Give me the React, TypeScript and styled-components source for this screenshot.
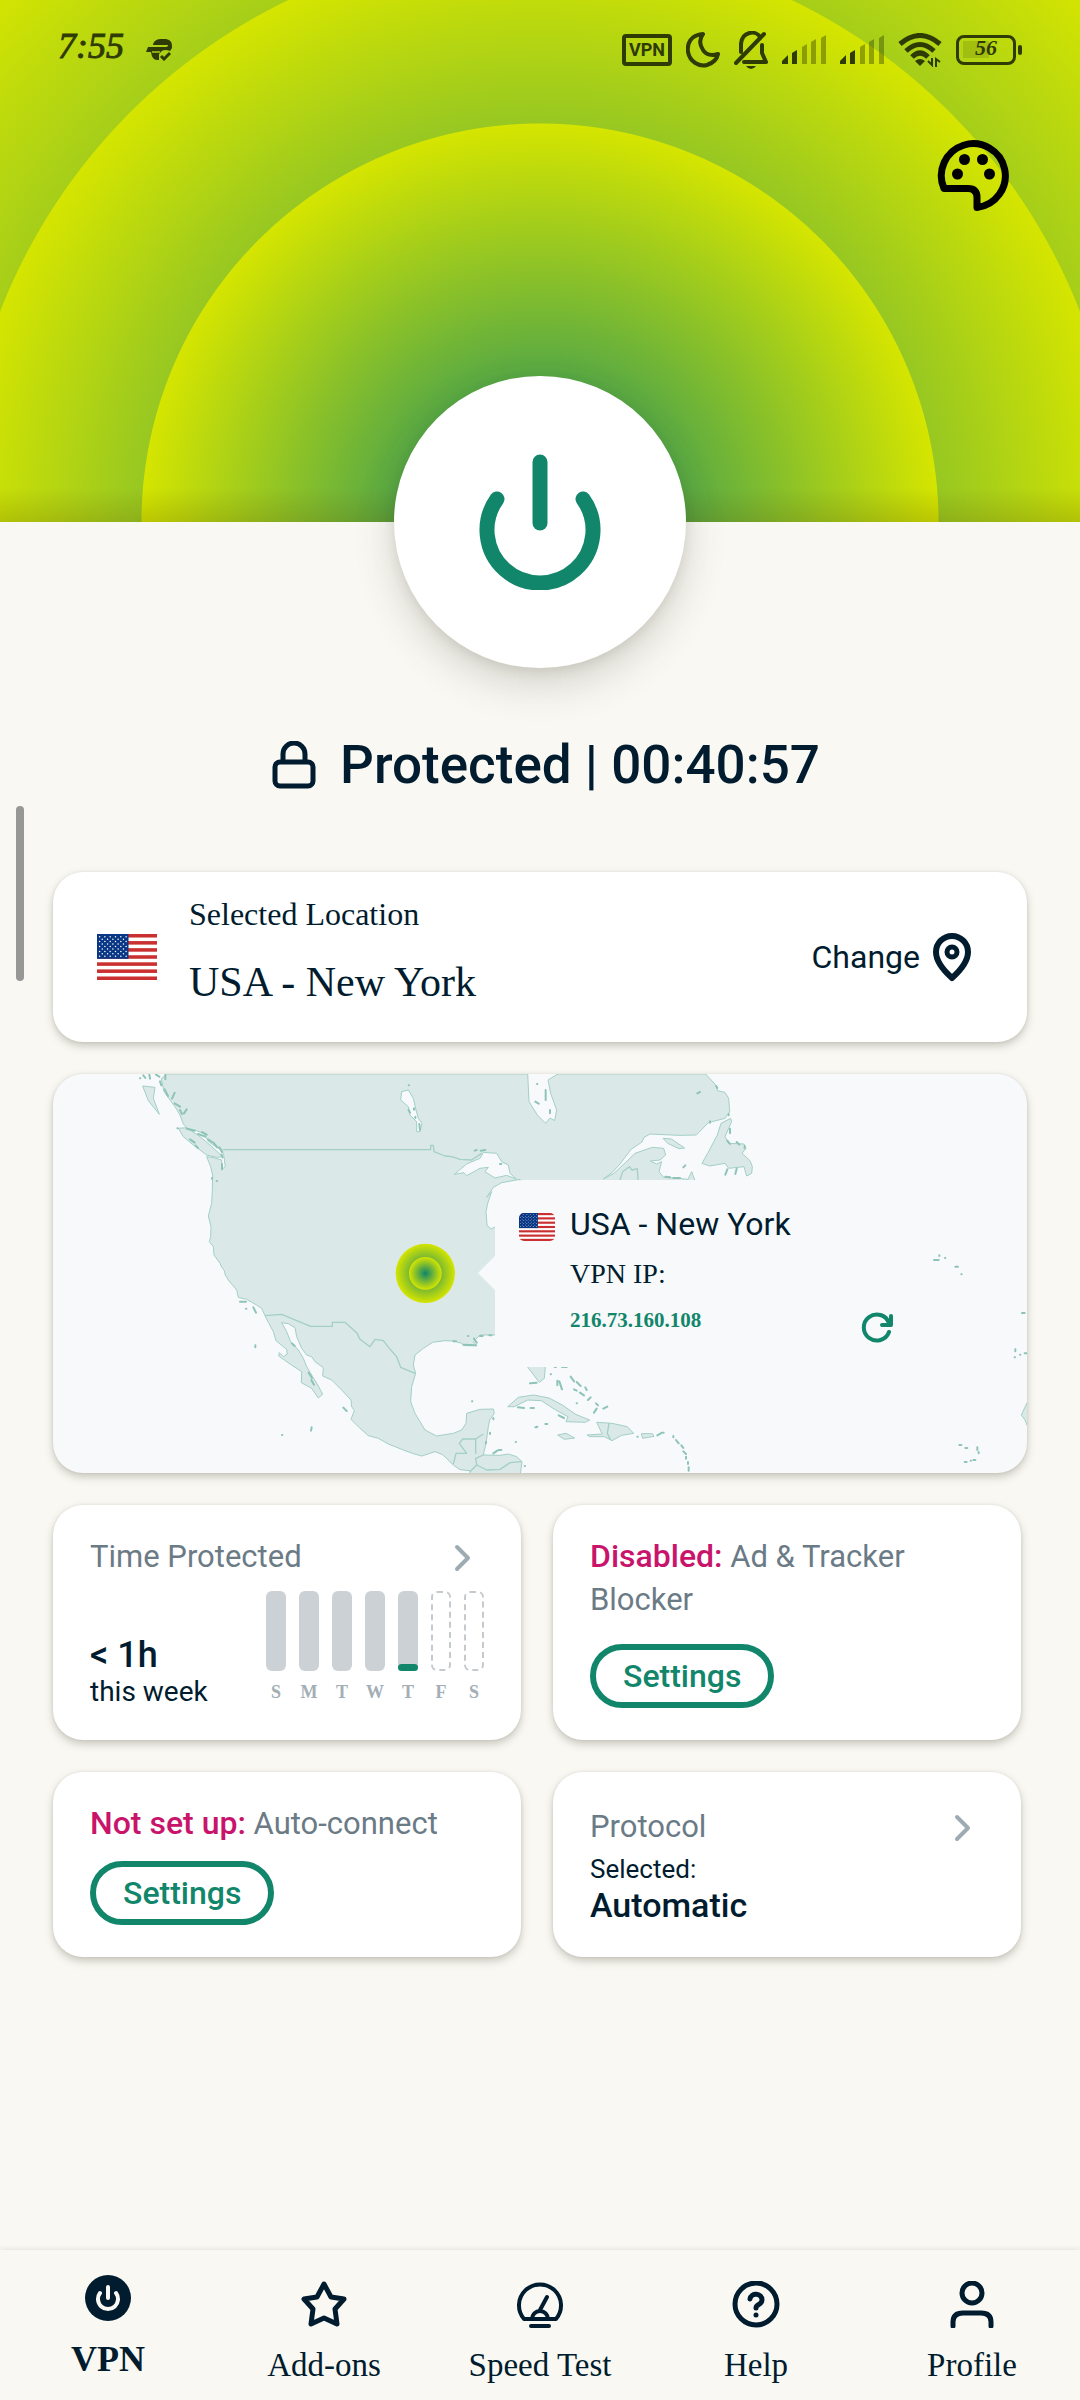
import React from "react";
import styled, { createGlobalStyle } from "styled-components";

const ink = "#001c2e";
const green = "#12866b";
const muted = "#6b7b86";
const faint = "#9fabb3";
const statusInk = "#2f3b04";
const sans = `Roboto, "Noto Sans", sans-serif`;
const serif = `"Liberation Serif", serif`;

const GlobalStyle = createGlobalStyle`
  *, *::before, *::after { box-sizing: border-box; }
  body { margin: 0; background: #f9f8f3; color: ${ink}; font-family: ${sans}; }
  button { font: inherit; color: inherit; cursor: pointer; }
  p, h1, h2 { margin: 0; font-weight: 400; }
  svg { display: block; flex: none; }
`;

const Screen = styled.div`
  position: relative;
  display: flex;
  flex-direction: column;
  min-height: 100vh;
  overflow: hidden;
`;

const Hero = styled.header`
  height: 522px;
  background:
    linear-gradient(to top, rgba(90, 80, 0, 0.2), rgba(90, 80, 0, 0) 34px),
    radial-gradient(circle at 50% 100%, #0f866c 0, #d5e500 398px, transparent 399px),
    radial-gradient(circle at 50% 100%, #0f866c 0, #d5e500 579px, transparent 580px),
    radial-gradient(circle at 50% 100%, #0f866c 0, #d5e500 760px);
`;

const StatusBar = styled.div`
  display: flex;
  align-items: center;
  gap: 14px;
  height: 100px;
  padding: 0 58px;
  color: ${statusInk};
`;

const Clock = styled.time`
  margin-right: 8px;
  padding-bottom: 8px;
  font: italic 36px/44px ${serif};
  -webkit-text-stroke: 1px ${statusInk};
`;

const Spacer = styled.span`
  flex: 1;
`;

const VpnBadge = styled.span`
  display: grid;
  place-items: center;
  width: 50px;
  height: 32px;
  border: 4px solid ${statusInk};
  border-radius: 4px;
  font: 700 18px/20px ${sans};
`;

const Battery = styled.span`
  display: flex;
  align-items: center;
  gap: 2px;
`;

const BatteryBody = styled.span`
  display: grid;
  place-items: center;
  width: 60px;
  height: 30px;
  padding-bottom: 4px;
  border: 3px solid ${statusInk};
  border-radius: 8px;
  background: linear-gradient(rgba(47, 59, 4, 0.15), rgba(47, 59, 4, 0.15)) 4px 3px / 26px 17px no-repeat;
  font: italic 700 22px/20px ${serif};
`;

const BatteryTip = styled.span`
  width: 4px;
  height: 10px;
  border-radius: 2px;
  background: ${statusInk};
`;

const ThemeBar = styled.div`
  display: flex;
  justify-content: flex-end;
  padding: 36px 65px 0;
`;

const PlainButton = styled.button`
  display: inline-flex;
  align-items: center;
  gap: 12px;
  padding: 0;
  border: 0;
  background: none;
`;

const PowerButton = styled.button`
  display: grid;
  place-items: center;
  align-self: center;
  width: 292px;
  height: 292px;
  margin-top: -146px;
  padding: 0;
  border: 0;
  border-radius: 50%;
  background: #fff;
  color: ${green};
  box-shadow: 0 16px 40px rgba(60, 60, 40, 0.2), 0 4px 12px rgba(60, 60, 40, 0.1);
`;

const Protection = styled.h1`
  display: flex;
  justify-content: center;
  align-items: center;
  gap: 24px;
  margin: 67px 0 77px;
  padding-left: 12px;
  font-weight: 500;
  font-size: 53px;
  line-height: 60px;
`;

const ScrollThumb = styled.span`
  position: absolute;
  top: 806px;
  left: 16px;
  width: 8px;
  height: 175px;
  border-radius: 4px;
  background: #979796;
`;

const Main = styled.main`
  display: flex;
  flex-direction: column;
  gap: 32px;
  padding: 0 53px 32px;
`;

const Card = styled.section`
  border-radius: 30px;
  background: #fff;
  box-shadow: 0 4px 8px rgba(60, 60, 40, 0.26), 0 0 3px rgba(60, 60, 40, 0.1);
`;

const LocationCard = styled(Card)`
  display: flex;
  align-items: center;
  gap: 32px;
  min-height: 170px;
  padding: 0 55px 0 44px;
`;

const LocationText = styled.div`
  display: grid;
  gap: 24px;
  flex: 1;
  padding-bottom: 14px;
  font-family: ${serif};
`;

const LocationLabel = styled.p`
  font-size: 32px;
  line-height: 40px;
`;

const LocationName = styled.h2`
  font-size: 42px;
  line-height: 48px;
`;

const ChangeButton = styled(PlainButton)`
  font-size: 32px;
  line-height: 40px;
`;

const MapCard = styled(Card)`
  position: relative;
  height: 399px;
  background: #f7f9fb;
`;

const MapDrawing = styled.svg`
  width: 100%;
  height: 100%;
  border-radius: 30px;
`;

const Popup = styled.div`
  position: absolute;
  top: 106px;
  left: calc(50% - 45px);
  display: grid;
  grid-template-columns: 36px 1fr 36px;
  column-gap: 15px;
  row-gap: 12px;
  align-content: start;
  width: 424px;
  height: 187px;
  padding: 24px;
  border-radius: 30px 30px 0 0;
  background: #f7f9fb;

  &::before {
    content: "";
    position: absolute;
    top: 75px;
    left: -17px;
    border: solid transparent;
    border-width: 18px 18px 18px 0;
    border-right-color: #f7f9fb;
  }
`;

const PopupFlag = styled.div`
  display: flex;
  align-items: flex-end;
  padding-bottom: 3px;
`;

const PopupTitle = styled.h2`
  grid-column: 2 / 4;
  font-size: 32px;
  line-height: 40px;
`;

const PopupLabel = styled.p`
  grid-column: 2 / 4;
  font: 28px/36px ${serif};
`;

const PopupIp = styled.p`
  grid-column: 2;
  color: ${green};
  font: 700 21px/32px ${serif};
`;

const RefreshButton = styled(PlainButton)`
  justify-content: center;
  padding-top: 8px;
  color: ${green};
`;

const Tiles = styled.div`
  display: grid;
  grid-template-columns: 1fr 1fr;
  gap: 32px;
  padding-right: 6px;
`;

const Tile = styled(Card)<{ $bottom?: boolean }>`
  display: flex;
  flex-direction: column;
  justify-content: ${(p) => (p.$bottom ? "flex-end" : "flex-start")};
  padding: 30px 37px 32px;
`;

const TileHeader = styled.div`
  display: flex;
  justify-content: space-between;
  align-items: center;
  padding-right: 10px;
`;

const TileTitle = styled.h2`
  color: ${muted};
  font-size: 31px;
  line-height: 43px;
`;

const Warning = styled.strong`
  color: #c9146c;
  font-weight: 500;
  font-size: 32px;
`;

const TileAction = styled.div`
  margin-top: auto;
  padding-top: 16px;
`;

const SettingsButton = styled.button`
  display: block;
  height: 64px;
  padding: 0 27px;
  border: 6px solid ${green};
  border-radius: 32px;
  background: none;
  color: ${green};
  font-weight: 500;
  font-size: 32px;
  line-height: 40px;
`;

const WeekRow = styled.div`
  display: flex;
  justify-content: space-between;
  min-height: 117px;
  margin-top: 13px;
`;

const WeekTotal = styled.div`
  align-self: flex-end;
`;

const Hours = styled.p`
  font-weight: 500;
  font-size: 36px;
  line-height: 42px;
`;

const Period = styled.p`
  font-size: 28px;
  line-height: 32px;
`;

const Chart = styled.div`
  display: flex;
  gap: 13px;
`;

const Day = styled.div`
  display: grid;
  align-content: start;
  justify-items: center;
  gap: 11px;
  width: 20px;
  color: #a3aeb5;
  font: 700 18px/20px ${serif};
`;

const Bar = styled.div<{ $future?: boolean }>`
  display: flex;
  align-items: flex-end;
  width: 20px;
  height: 80px;
  border: ${(p) => (p.$future ? "2px dashed #c4cacd" : "0")};
  border-radius: 6px;
  background: ${(p) => (p.$future ? "none" : "#ccd1d5")};
`;

const BarFill = styled.div`
  width: 100%;
  border-radius: 4px;
  background: ${green};
`;

const SelectedLabel = styled.p`
  margin-top: 5px;
  font-size: 26px;
  line-height: 32px;
`;

const SelectedValue = styled.p`
  font-weight: 500;
  font-size: 34px;
  line-height: 40px;
`;

const BottomNav = styled.nav`
  display: grid;
  grid-template-columns: repeat(5, 1fr);
  height: 150px;
  margin-top: auto;
  background: #f9f8f3;
  box-shadow: 0 -2px 4px rgba(60, 60, 40, 0.08);
`;

const NavLink = styled.a<{ $active?: boolean }>`
  display: flex;
  flex-direction: column;
  align-items: center;
  gap: 17px;
  padding-top: ${(p) => (p.$active ? "25px" : "31px")};
  color: ${ink};
  text-decoration: none;
  white-space: nowrap;
  font: ${(p) => (p.$active ? "700 36px/40px" : "400 33px/40px")} ${serif};
`;

function Flag({ width, height, radius = 0 }: { width: number; height: number; radius?: number }) {
  const stars: React.ReactNode[] = [];
  for (let r = 0; r < 9; r++) {
    const odd = r % 2;
    for (let c = 0; c < 6 - odd; c++) {
      stars.push(<circle key={`${r}-${c}`} cx={2.6 + c * 5.3 + odd * 2.65} cy={2.7 + r * 2.45} r="0.75" fill="#fff" />);
    }
  }
  return (
    <svg width={width} height={height} viewBox="0 0 60 46" preserveAspectRatio="none" style={{ borderRadius: radius }} role="img" aria-label="United States flag">
      <rect width="60" height="46" fill="#fff" />
      {[0, 1, 2, 3, 4, 5, 6].map((i) => (
        <rect key={i} y={i * 7.08} width="60" height="3.54" fill="#c9302f" />
      ))}
      <rect width="31.5" height="24.8" fill="#0a3785" />
      {stars}
    </svg>
  );
}

function Signal() {
  return (
    <svg width="44" height="30" viewBox="0 0 44 30" fill={statusInk}>
      <path d="M0 29V26L6 20V29Z" />
      <path d="M10 29V18L15 15V29Z" />
      <path d="M20 29V12L25 9V29ZM29 29V7L34 4V29ZM39 29V3L44 0V29Z" opacity="0.4" />
    </svg>
  );
}

function Chevron() {
  return (
    <svg width="22" height="32" viewBox="0 0 22 32" fill="none" stroke={faint} strokeWidth="4" strokeLinecap="round" strokeLinejoin="round">
      <path d="M5 6L16 17L5 28" />
    </svg>
  );
}

const land =
  "M380 42L364 56L372 95L390 120L405 140L420 165L430 192L442 205L470 212L492 222L506 245L530 262L546 270L552 290L556 320L546 328L545 300L520 293L500 290L512 320L518 345L517 390L515 430L505 468L513 500L512 530L508 545L520 560L522 585L540 610L543 618L553 632L556 645L565 660L590 690L595 712L620 718L650 735L665 745L675 767L685 787L700 815L708 842L740 868L742 882L730 890L718 878L716 888L750 912L785 935L784 968L815 985L835 1014L848 1003L835 978L818 950L800 920L790 895L775 870L752 845L740 815L725 788L745 791L765 803L770 830L785 865L800 885L815 890L825 905L850 923L848 948L875 960L905 990L933 1020L935 1040L943 1052L933 1078L955 1100L985 1127L1015 1135L1045 1152L1090 1170L1120 1181L1145 1188L1185 1175L1208 1184L1240 1215L1260 1229L1290 1232V1250H1440L1446 1205L1430 1190L1405 1182L1380 1186L1330 1185L1338 1150L1345 1100L1349 1080L1363 1060L1360 1047L1320 1048L1280 1060L1278 1090L1265 1110L1240 1120L1190 1128L1155 1110L1125 1060L1112 1025L1115 980L1127 940L1120 915L1125 885L1150 865L1178 847L1215 842L1240 843L1265 850L1275 857L1310 857L1300 845L1320 825L1365 825L1430 840L1463 921L1481 945L1498 967L1513 955L1516 921L1500 830L1560 650L1700 480L1960 368L1960 360L1925 356L1871 352L1857 335L1865 305L1850 312L1831 303L1860 300L1877 285L1871 265L1837 262L1785 280L1756 308L1722 340L1690 357L1716 338L1740 312L1773 268L1806 246L1812 232L1830 222L1917 226L1969 225L2005 188L2055 175L2069 155L2066 115L2055 97L2032 92L2030 78L2009 55L1997 42Z";

const islands = [
  "M415 205L440 203L480 230L510 255L548 290L530 292L500 285L460 255L430 230Z",
  "M308 78L345 82L340 115L358 163L325 122Z",
  "M1986 310L2003 280L2032 225L2043 190L2072 175L2075 185L2055 230L2066 250L2112 252L2118 265L2106 280L2130 302L2137 320L2135 340L2120 348L2112 320L2066 325L2055 310L2009 318Z",
  "M1869 235L1894 237L1934 264L1917 266L1883 250Z",
  "M1942 362L1955 335L1965 362Z",
  "M1403 1040L1435 1012L1481 1005L1527 1014L1567 1035L1607 1063L1649 1080L1636 1087L1578 1085L1584 1070L1544 1048L1504 1022L1463 1020L1423 1040Z",
  "M1641 1125L1687 1122L1670 1087L1716 1090L1762 1100L1781 1120L1745 1126L1716 1142L1693 1130L1650 1130Z",
  "M1804 1121L1837 1121L1842 1129L1808 1135Z",
  "M1553 1125L1578 1120L1604 1134L1573 1138Z",
  "M2944 1065L2965 1020V1105L2955 1080Z",
];

const waters = [
  "M1463 40L1467 125L1492 165L1517 190L1530 174L1544 182L1550 150L1532 100L1524 60L1557 40Z",
  "M1085 95L1105 90L1120 115L1128 150L1135 175L1146 190L1140 215L1130 215L1130 185L1110 165L1105 140L1082 120Z",
  "M1243 343L1280 312L1320 295L1330 277L1370 280L1385 305L1405 315L1410 340L1430 358L1400 346L1365 354L1335 335L1345 322L1320 325L1280 347L1272 338Z",
  "M1440 358L1385 368L1360 382L1340 412L1355 395L1343 430L1338 455L1341 495L1352 507L1368 500L1440 420Z",
];

const specks =
  "M300 55h1M310 46l6 8M328 44l2 12M348 44l10 6M360 64l4 12M376 44v14M374 88l10 20M396 116l8-18M404 130l16 10M420 150l6 12M432 160l8-12M440 206l24 6M474 222l22 8M486 216l14 8M504 238l12 8M520 248l12 14M538 262l8 14M544 284l4 8M450 238l14 10M466 256l8 8M412 205h1M546 328v-16M516 354v2M530 363h1M600 725h18M618 746h1M640 742l8 16M646 856v6M726 1125h1M813 1112l2-10M910 1043l10 10M806 938l10 16M814 960l8 14M756 850l8 8M1106 76h1M1106 150l4 8M1122 145v4M1126 170v4M1138 192l2 18M1304 272l6-2M1322 272l14-2M1380 312h4M1296 1024h1M1360 1074v4M1350 1118v4M1338 1146v4M1284 828h1M1240 844h8M1270 854l38 2M1302 836l8 12M1320 828h8M1348 826h6M1360 1180l12-8M1376 1170h8M1427 1146h1M1454 1218h1M1434 1042l18 2M1472 1044h10M1486 1102h4M1470 970l20-2M1491 72h1M1517 90v30M1530 150v10M1486 125l10 6M1532 943h1M1544 921h4M1566 921h14M1558 964l8 24M1552 962v14M1592 950l10 14M1610 966l12 12M1602 988l8 4M1620 998l12 8M1636 982l4 8M1644 1020l8-8M1668 1030l6 6M1662 1058l8-12M1690 1046l12-6M1610 1030h1M1490 1100h2M1516 1092h6M1556 1066l16 8M1792 1130h1M1852 1126l14-8M1870 1118h1M1900 1128v4M1908 1140l8 10M1924 1156l6 8M1930 1174l8 8M1938 1190v6M1944 1206v6M1946 1222v10M2028 78l4 6M1972 100l8-4M2010 184v4M2066 162v4M2070 206v14M2062 242l8 10M2090 246l8 8M2114 258v6M2090 326l-4 16M2062 328l-6 16M1930 322l6-6M1876 350l14 2M1900 354h20M2682 600h14M2698 586v2M2715 594h1M2746 620h8M2764 643h1M2758 1155h6M2776 1164h6M2812 1162v8M2816 1176v4M2800 1200h6M2774 1206h6M2792 1202h1M2926 868v6M2924 892h1M2940 884h1M2954 880h6M2946 759h8";

function NorthAmerica() {
  return (
    <MapDrawing viewBox="39 42 2922 1197" preserveAspectRatio="xMidYMid slice" role="img" aria-label="Map of North America">
      <defs>
        <radialGradient id="pulse">
          <stop offset="0" stopColor="#0f866c" />
          <stop offset="1" stopColor="#d5e500" />
        </radialGradient>
      </defs>
      <g fill="#dae9e7" stroke="#a3cfc5" strokeWidth="3" strokeLinejoin="round">
        <path d={land} />
        {islands.map((d) => (
          <path key={d} d={d} />
        ))}
      </g>
      <g fill="#f7f9fb" stroke="#a3cfc5" strokeWidth="3" strokeLinejoin="round">
        {waters.map((d) => (
          <path key={d} d={d} />
        ))}
      </g>
      <g fill="none" stroke="#a3cfc5" strokeWidth="4" strokeLinejoin="round">
        <path d="M548 269H1172V256H1180L1182 275L1215 288L1235 290L1260 298L1295 300L1325 280" />
        <path d="M675 767L725 763L812 799H877V787H915L950 818L960 838L990 860L1005 838L1030 842L1048 865L1070 890L1082 922L1125 940" />
        <path d="M1240 1212L1248 1180H1280L1258 1150L1268 1137H1307V1182M1307 1137L1330 1122M1290 1235L1310 1215L1307 1195L1330 1185M1310 1215L1340 1230L1380 1228L1410 1208L1445 1205" />
        <path d="M1740 360L1748 335L1768 320L1776 330L1792 326L1794 360M1707 1090L1702 1120L1712 1140" />
      </g>
      <path d={specks} fill="none" stroke="#8ec4b8" strokeWidth="6" strokeLinecap="round" strokeLinejoin="round" />
      <circle cx="1156" cy="640" r="89" fill="url(#pulse)" />
      <circle cx="1156" cy="640" r="49" fill="url(#pulse)" />
    </MapDrawing>
  );
}

const week = [
  { day: "S", fill: 0 },
  { day: "M", fill: 0 },
  { day: "T", fill: 0 },
  { day: "W", fill: 0 },
  { day: "T", fill: 9 },
  { day: "F", fill: 0, future: true },
  { day: "S", fill: 0, future: true },
];

const navIcon = {
  width: 48,
  height: 47,
  viewBox: "0 0 48 47",
  fill: "none",
  stroke: ink,
  strokeWidth: 5,
  strokeLinecap: "round" as const,
  strokeLinejoin: "round" as const,
};

export default function App() {
  return (
    <Screen>
      <GlobalStyle />
      <Hero>
        <StatusBar>
          <Clock>7:55</Clock>
          <svg width="28" height="22" viewBox="0 0 28 22" fill={statusInk}>
            <path d="M7 5Q9 0 15 0H20Q27 1 26 9L24 12Q17 9 14 14L13 15V21H11Q6 21 5 13H0L2 8H19Q22 8 22 6H7Z" />
            <path d="M15 17L18 20L24 14" fill="none" stroke={statusInk} strokeWidth="3" />
            <path d="M6 13H14" stroke="#a9d114" strokeWidth="1.5" />
          </svg>
          <Spacer />
          <VpnBadge>VPN</VpnBadge>
          <svg width="34" height="36" viewBox="0 0 34 36" fill="none" stroke={statusInk} strokeWidth="4" strokeLinejoin="round">
            <path d="M17 2C4 3 1 12 2 20C4 30 13 35 21 33C27 31 31 27 32 22C26 24 20 23 17 18C13 12 14 6 17 2Z" />
          </svg>
          <svg width="34" height="38" viewBox="0 0 34 38" fill="none" stroke={statusInk} strokeWidth="4" strokeLinecap="round" strokeLinejoin="round">
            <path d="M7 21V13C8 0 22 -1 26 6M28 14V22L32 31H10M2 32L30 3" />
            <path d="M12 35H22Q20 38 17 38Q14 38 12 35Z" fill={statusInk} stroke="none" />
          </svg>
          <Signal />
          <Signal />
          <svg width="44" height="34" viewBox="0 0 44 34" fill="none" stroke={statusInk} strokeWidth="5">
            <path d="M2 11Q22 -6 42 11M8 18Q22 5 36 18M14 24Q22 16 30 24" />
            <path d="M17 28Q22 24 27 28L22 33Z" fill={statusInk} stroke="none" />
            <path d="M30 28L34 32V25M42 29L38 26V34" strokeWidth="2" />
          </svg>
          <Battery>
            <BatteryBody>56</BatteryBody>
            <BatteryTip />
          </Battery>
        </StatusBar>
        <ThemeBar>
          <PlainButton aria-label="Theme">
            <svg width="80" height="80" viewBox="0 0 80 80" fill="none" stroke="#000" strokeWidth="7" strokeLinecap="round" strokeLinejoin="round">
              <path d="M9 52.5H33Q42 52.5 42 61.5V71.5A32 32 0 1 0 9 52.5Z" />
              <g fill="#000" stroke="none">
                <circle cx="22.5" cy="38" r="5.5" />
                <circle cx="29.5" cy="23.5" r="5.5" />
                <circle cx="47.5" cy="23.5" r="5.5" />
                <circle cx="54.5" cy="38" r="5.5" />
              </g>
            </svg>
          </PlainButton>
        </ThemeBar>
      </Hero>

      <PowerButton aria-label="Disconnect">
        <svg width="136" height="136" viewBox="0 0 136 136" fill="none" stroke="currentColor" strokeWidth="15" strokeLinecap="round">
          <path d="M68 8V69" />
          <path d="M25 45A53 53 0 1 0 111 45" />
        </svg>
      </PowerButton>

      <Protection>
        <svg width="44" height="48" viewBox="0 0 44 48" fill="none" stroke={ink} strokeWidth="5" strokeLinejoin="round">
          <rect x="3" y="21" width="38" height="24" rx="5" />
          <path d="M11 21V13A11 11 0 0 1 33 13V21" />
        </svg>
        Protected | 00:40:57
      </Protection>

      <ScrollThumb />

      <Main>
        <LocationCard>
          <Flag width={60} height={46} />
          <LocationText>
            <LocationLabel>Selected Location</LocationLabel>
            <LocationName>USA - New York</LocationName>
          </LocationText>
          <ChangeButton>
            Change
            <svg width="40" height="50" viewBox="0 0 40 50" fill="none" stroke={ink} strokeWidth="6" strokeLinejoin="round">
              <path d="M20 46C10 37 4 29 4 20A16 16 0 0 1 36 20C36 29 30 37 20 46Z" />
              <circle cx="20" cy="20" r="5" strokeWidth="5" />
            </svg>
          </ChangeButton>
        </LocationCard>

        <MapCard>
          <NorthAmerica />
          <Popup>
            <PopupFlag>
              <Flag width={36} height={28} radius={5} />
            </PopupFlag>
            <PopupTitle>USA - New York</PopupTitle>
            <PopupLabel>VPN IP:</PopupLabel>
            <PopupIp>216.73.160.108</PopupIp>
            <RefreshButton aria-label="Refresh IP">
              <svg width="36" height="32" viewBox="0 0 36 32" fill="none" stroke="currentColor" strokeWidth="4" strokeLinecap="round" strokeLinejoin="round">
                <path d="M30 20A13 13 0 1 1 30 11M32 4V13H23" />
              </svg>
            </RefreshButton>
          </Popup>
        </MapCard>

        <Tiles>
          <Tile>
            <TileHeader>
              <TileTitle>Time Protected</TileTitle>
              <Chevron />
            </TileHeader>
            <WeekRow>
              <WeekTotal>
                <Hours>&lt; 1h</Hours>
                <Period>this week</Period>
              </WeekTotal>
              <Chart>
                {week.map((d, i) => (
                  <Day key={i}>
                    <Bar $future={d.future}>
                      <BarFill style={{ height: `${d.fill}%` }} />
                    </Bar>
                    {d.day}
                  </Day>
                ))}
              </Chart>
            </WeekRow>
          </Tile>

          <Tile>
            <TileTitle>
              <Warning>Disabled:</Warning> Ad &amp; Tracker Blocker
            </TileTitle>
            <TileAction>
              <SettingsButton>Settings</SettingsButton>
            </TileAction>
          </Tile>

          <Tile>
            <TileTitle>
              <Warning>Not set up:</Warning> Auto-connect
            </TileTitle>
            <TileAction>
              <SettingsButton>Settings</SettingsButton>
            </TileAction>
          </Tile>

          <Tile $bottom>
            <TileHeader>
              <TileTitle>Protocol</TileTitle>
              <Chevron />
            </TileHeader>
            <SelectedLabel>Selected:</SelectedLabel>
            <SelectedValue>Automatic</SelectedValue>
          </Tile>
        </Tiles>
      </Main>

      <BottomNav>
        <NavLink href="#vpn" $active>
          <svg {...navIcon} strokeWidth={4}>
            <circle cx="24" cy="23" r="23" fill={ink} stroke="none" />
            <path d="M24 12V23M16 18A10 10 0 1 0 32 18" stroke="#f9f8f3" />
          </svg>
          VPN
        </NavLink>
        <NavLink href="#addons">
          <svg {...navIcon}>
            <path d="M24 3L31 16L44 18L35 28L37 43L24 37L11 43L13 28L4 18L17 16Z" />
          </svg>
          Add-ons
        </NavLink>
        <NavLink href="#speed">
          <svg {...navIcon} strokeWidth={4}>
            <path d="M8 38A21 21 0 1 1 40 38ZM16 38A8 8 0 0 1 32 38M24 29L31 16M15 45H33" />
          </svg>
          Speed Test
        </NavLink>
        <NavLink href="#help">
          <svg {...navIcon}>
            <circle cx="24" cy="23" r="21" />
            <path d="M18 18C19 11 30 12 30 19C30 24 24 23 24 27M24 34V34.1" />
          </svg>
          Help
        </NavLink>
        <NavLink href="#profile">
          <svg {...navIcon}>
            <circle cx="24" cy="12" r="10" />
            <path d="M5 45V41Q5 32 15 32H33Q43 32 43 41V45" />
          </svg>
          Profile
        </NavLink>
      </BottomNav>
    </Screen>
  );
}
